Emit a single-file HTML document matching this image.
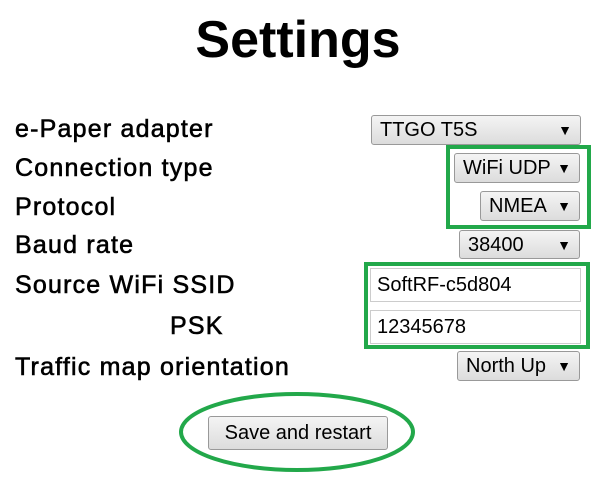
<!DOCTYPE html>
<html><head><style>
body{margin:0;width:600px;height:493px;background:#fff;font-family:"Liberation Sans",sans-serif;position:relative;overflow:hidden;color:#000}
.a{position:absolute}
h1{position:absolute;left:0;width:596px;text-align:center;top:10px;margin:0;font-size:52px;font-weight:bold}
.l{position:absolute;left:15px;font-size:25px;font-weight:normal;-webkit-text-stroke:0.6px #000;letter-spacing:1.2px}
.s{position:absolute;box-sizing:border-box;border:1px solid #999;border-radius:3px;background:linear-gradient(#f4f4f4,#dcdcdc);font-size:20px;padding-left:8px;line-height:28px}
.s i{position:absolute;right:8px;font-style:normal;font-size:14px}
.in{position:absolute;box-sizing:border-box;border:1px solid #ccc;background:#fff;font-size:20px;padding-left:6px;line-height:32px}
.g{position:absolute;border:4px solid #22a84a;box-sizing:border-box}
</style></head><body>
<h1>Settings</h1>
<div class="l" style="top:115px">e-Paper adapter</div>
<div class="l" style="top:154px">Connection type</div>
<div class="l" style="top:193px">Protocol</div>
<div class="l" style="top:231px">Baud rate</div>
<div class="l" style="top:271px">Source WiFi SSID</div>
<div class="l" style="top:312px;left:170px">PSK</div>
<div class="l" style="top:353px">Traffic map orientation</div>
<div class="s" style="left:371px;top:115px;width:210px;height:30px">TTGO T5S<i>▼</i></div>
<div class="s" style="left:454px;top:153px;width:126px;height:30px">WiFi UDP<i>▼</i></div>
<div class="s" style="left:480px;top:191px;width:100px;height:30px">NMEA<i>▼</i></div>
<div class="s" style="left:459px;top:230px;width:121px;height:29px">38400<i>▼</i></div>
<div class="in" style="left:370px;top:268px;width:211px;height:34px">SoftRF-c5d804</div>
<div class="in" style="left:370px;top:310px;width:211px;height:34px">12345678</div>
<div class="s" style="left:457px;top:351px;width:123px;height:30px">North Up<i>▼</i></div>
<div class="s" style="left:208px;top:416px;width:180px;height:34px;line-height:32px;padding:0;text-align:center">Save and restart</div>
<div class="g" style="left:446px;top:145px;width:145px;height:84px"></div>
<div class="g" style="left:364px;top:262px;width:226px;height:87px"></div>
<svg class="a" style="left:0;top:0" width="600" height="493"><ellipse cx="297" cy="432" rx="116" ry="38" fill="none" stroke="#22a84a" stroke-width="4"/></svg>
</body></html>
